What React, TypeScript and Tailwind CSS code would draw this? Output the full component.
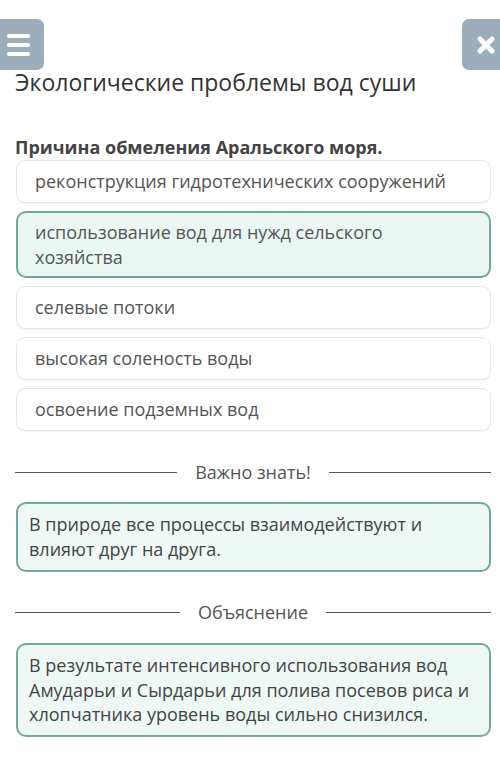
const options = [
  'реконструкция гидротехнических сооружений',
  'использование вод для нужд сельского хозяйства',
  'селевые потоки',
  'высокая соленость воды',
  'освоение подземных вод',
]

function Divider({ label }: { label: string }) {
  return (
    <div className="flex items-center gap-[18px] px-[15px] pr-[9px]">
      <div className="h-px flex-1 bg-[#555]" />
      <span className="text-[18px] leading-[25px] text-[#555]">{label}</span>
      <div className="h-px flex-1 bg-[#555]" />
    </div>
  )
}

export default function App() {
  return (
    <div
      className="min-h-[767px] w-[500px] bg-white pt-[19px]"
      style={{ fontFamily: '"Open Sans", "Noto Sans", sans-serif' }}
    >
      <div className="flex items-start justify-between">
        <button className="flex h-[51px] w-[44px] flex-col items-start justify-center gap-[5px] rounded-r-[7px] bg-[#9aaebb] pl-[7px]">
          <span className="h-[4px] w-[23px] rounded-sm bg-white" />
          <span className="h-[4px] w-[23px] rounded-sm bg-white" />
          <span className="h-[4px] w-[23px] rounded-sm bg-white" />
        </button>
        <button className="flex h-[51px] w-[38px] items-center justify-end rounded-l-[7px] bg-[#9aaebb] pr-[4px]">
          <svg width="20" height="20" viewBox="0 0 20 20">
            <path d="M4 4 L16 16 M16 4 L4 16" stroke="white" strokeWidth="5" strokeLinecap="round" />
          </svg>
        </button>
      </div>

      <h1 className="-mt-[3px] px-[15px] text-[23px] leading-[30px] text-[#333]">
        Экологические проблемы вод суши
      </h1>

      <p className="mt-[38px] px-[15px] text-[18px] font-bold leading-[24px] text-[#444]">
        Причина обмеления Аральского моря.
      </p>

      <div className="mt-[1px] flex flex-col gap-[8px] pl-[16px] pr-[9px]">
        {options.map((o, i) =>
          i === 1 ? (
            <div
              key={o}
              className="rounded-[10px] border-2 border-[#6ea89b] bg-[#eaf7f3] py-[7px] pl-[17px] pr-[16px] text-[18px] leading-[24.5px] text-[#555]"
            >
              <span className="block w-[350px]">{o}</span>
            </div>
          ) : (
            <div
              key={o}
              className="rounded-[9px] border border-[#e6e6e6] bg-white py-[8px] pl-[18px] pr-[16px] text-[18px] leading-[25px] text-[#555] shadow-[0_1px_2px_rgba(0,0,0,0.04)]"
            >
              {o}
            </div>
          ),
        )}
      </div>

      <div className="mt-[29px]">
        <Divider label="Важно знать!" />
      </div>

      <div className="ml-[16px] mr-[9px] mt-[17px] rounded-[10px] border-2 border-[#72a99c] bg-[#eef8f5] py-[8px] pl-[11px] pr-[10px] text-[18px] leading-[25px] text-[#444]">
        В природе все процессы взаимодействуют и влияют друг на друга.
      </div>

      <div className="mt-[28px]">
        <Divider label="Объяснение" />
      </div>

      <div className="ml-[16px] mr-[9px] mt-[18px] rounded-[10px] border-2 border-[#72a99c] bg-[#eef8f5] py-[8px] pl-[11px] pr-[10px] text-[18px] leading-[24.5px] text-[#444]">
        В результате интенсивного использования вод Амударьи и Сырдарьи для полива посевов риса и хлопчатника уровень воды сильно снизился.
      </div>
    </div>
  )
}
